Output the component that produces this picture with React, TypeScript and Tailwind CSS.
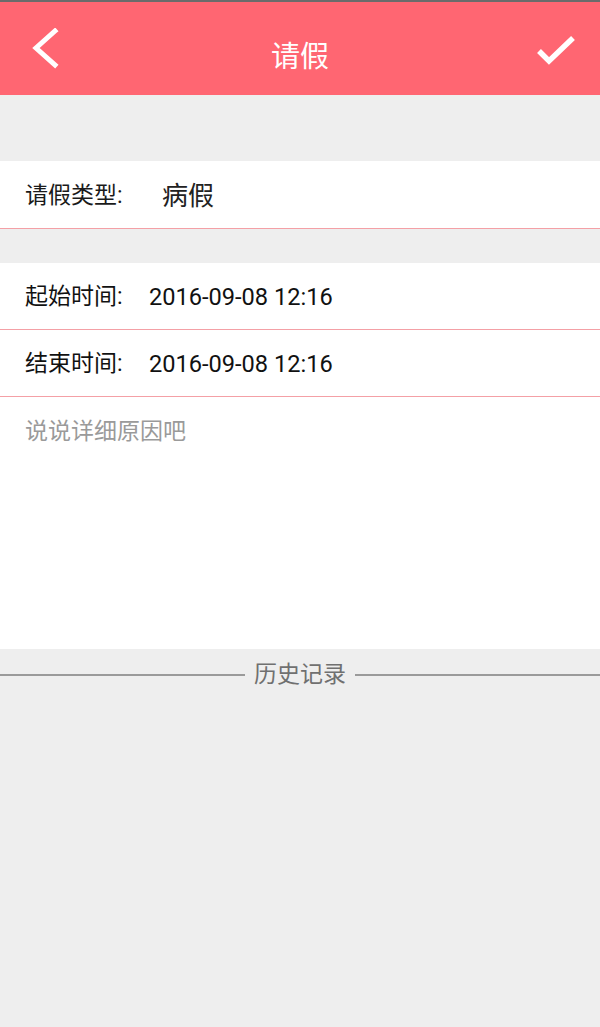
export default function App() {
  const font = { fontFamily: '"Roboto", "Noto Sans CJK SC", sans-serif' };
  return (
    <div className="w-[600px] h-[1027px] bg-[#eeeeee] flex flex-col" style={font}>
      <div className="h-[2px] bg-[#6b6b6b]" />
      <header className="h-[93px] bg-[#ff6672] flex items-center justify-between px-[30px] relative">
        <svg width="30" height="42" viewBox="0 0 30 42" className="ml-[1px]">
          <path d="M24 3 L5 20 L24 37" stroke="#fff" strokeWidth="5" fill="none" strokeLinecap="square" />
        </svg>
        <h1 className="absolute left-0 right-0 top-[36px] text-center text-white text-[29px] leading-[38px] pointer-events-none">请假</h1>
        <svg width="44" height="34" viewBox="0 0 44 34" className="mr-[-8px] mt-[4px]">
          <path d="M5 17 L15 27 L39 4" stroke="#fff" strokeWidth="5.5" fill="none" />
        </svg>
      </header>

      <div className="h-[66px]" />

      <div className="h-[68px] bg-white border-b border-[#f4a0a6] flex items-center pl-[25px] pt-[4px] text-[23px] text-[#1a1a1a]">
        <span className="w-[137px]">请假类型:</span>
        <span className="text-[26px] text-[#222]">病假</span>
      </div>

      <div className="h-[34px]" />

      <div className="bg-white">
        <div className="h-[67px] border-b border-[#f4a0a6] flex items-center pl-[25px] pt-[3px] text-[23px] text-[#111]">
          <span className="w-[124px]">起始时间:</span>
          <span className="text-[23.6px]">2016-09-08 12:16</span>
        </div>
        <div className="h-[67px] border-b border-[#f4a0a6] flex items-center pl-[25px] pt-[3px] text-[23px] text-[#111]">
          <span className="w-[124px]">结束时间:</span>
          <span className="text-[23.6px]">2016-09-08 12:16</span>
        </div>
        <div className="h-[252px] pl-[25px] pt-[18px] text-[23px] text-[#9a9a9a]">说说详细原因吧</div>
      </div>

      <div className="flex items-center mt-[9px]">
        <div className="flex-1 h-[2px] bg-[#9a9a9a]" />
        <span className="px-[9px] text-[23px] text-[#707070]">历史记录</span>
        <div className="flex-1 h-[2px] bg-[#9a9a9a]" />
      </div>
    </div>
  );
}
